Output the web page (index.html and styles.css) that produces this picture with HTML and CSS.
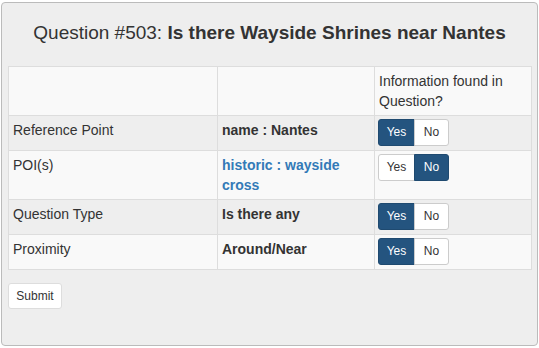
FILE: index.html
```html
<!DOCTYPE html>
<html lang="en">

<head>
    <meta charset="UTF-8">
    <meta name="viewport" content="width=device-width, initial-scale=1.0">
    <title>Question #503</title>

    <link rel="stylesheet" href="styles.css">
</head>

<body>

    <div id="panel">
        <h3 class="title">Question #503: <b>Is there Wayside Shrines near Nantes</b></h3>

        <form>
            <table id="tbl">
                <colgroup>
                    <col class="c1">
                    <col class="c2">
                    <col class="c3">
                </colgroup>
                <tr>
                    <td></td>
                    <td></td>
                    <td>Information found in Question?</td>
                </tr>
                <tr>
                    <td>Reference Point</td>
                    <td class="val">name : Nantes</td>
                    <td class="pick">
                        <div class="group">
                            <span class="btn yes on">Yes</span><span class="btn no">No</span>
                        </div>
                    </td>
                </tr>
                <tr>
                    <td>POI(s)</td>
                    <td class="val"><a href="#">historic : wayside cross</a></td>
                    <td class="pick">
                        <div class="group">
                            <span class="btn yes">Yes</span><span class="btn no on">No</span>
                        </div>
                    </td>
                </tr>
                <tr>
                    <td>Question Type</td>
                    <td class="val">Is there any</td>
                    <td class="pick">
                        <div class="group">
                            <span class="btn yes on">Yes</span><span class="btn no">No</span>
                        </div>
                    </td>
                </tr>
                <tr>
                    <td>Proximity</td>
                    <td class="val">Around/Near</td>
                    <td class="pick">
                        <div class="group">
                            <span class="btn yes on">Yes</span><span class="btn no">No</span>
                        </div>
                    </td>
                </tr>
            </table>

            <button type="submit" class="submit">Submit</button>
        </form>
    </div>

</body>

</html>
```

FILE: styles.css
```css
body {
    margin: 0;
    font-family: "Liberation Sans", Arial, sans-serif;
    font-size: 14px;
    color: #333;
}

#panel {
    margin: 2px 1px 0 1px;
    width: 537px;
    height: 344px;
    box-sizing: border-box;
    border: 1px solid #bbb;
    border-radius: 4px;
    background: #eee;
    padding: 0 6px;
}

.title {
    margin: 0;
    padding: 20px 0 23px;
    font-size: 19px;
    line-height: 20px;
    font-weight: normal;
    text-align: center;
}

#tbl {
    width: 523px;
    border-collapse: collapse;
    table-layout: fixed;
}

.c1 {
    width: 209px;
}

.c2 {
    width: 157px;
}

.c3 {
    width: 157px;
}

#tbl td {
    border: 1px solid #ddd;
    padding: 4px;
    line-height: 20px;
    vertical-align: top;
}

#tbl td.pick {
    padding: 3px 4px 4px;
}

#tbl tr:nth-child(odd) {
    background: #f9f9f9;
}

.val {
    font-weight: bold;
}

.val a {
    color: #337ab7;
    text-decoration: none;
}

.group {
    display: flex;
    margin-left: -1px;
}

.btn {
    display: block;
    box-sizing: border-box;
    height: 27px;
    padding: 4px 0;
    font-size: 12px;
    line-height: 17px;
    text-align: center;
    background: #fff;
    border: 1px solid #ccc;
}

.yes {
    width: 37px;
    border-radius: 3px 0 0 3px;
}

.no {
    width: 35px;
    margin-left: -1px;
    border-radius: 0 3px 3px 0;
}

.btn.on {
    background: #24547f;
    border-color: #1f4a70;
    color: #fff;
}

.submit {
    display: block;
    margin-top: 13px;
    height: 26px;
    width: 54px;
    padding: 0;
    font-family: "Liberation Sans", Arial, sans-serif;
    font-size: 12px;
    color: #333;
    background: #fff;
    border: 1px solid #ddd;
    border-radius: 3px;
}
```
